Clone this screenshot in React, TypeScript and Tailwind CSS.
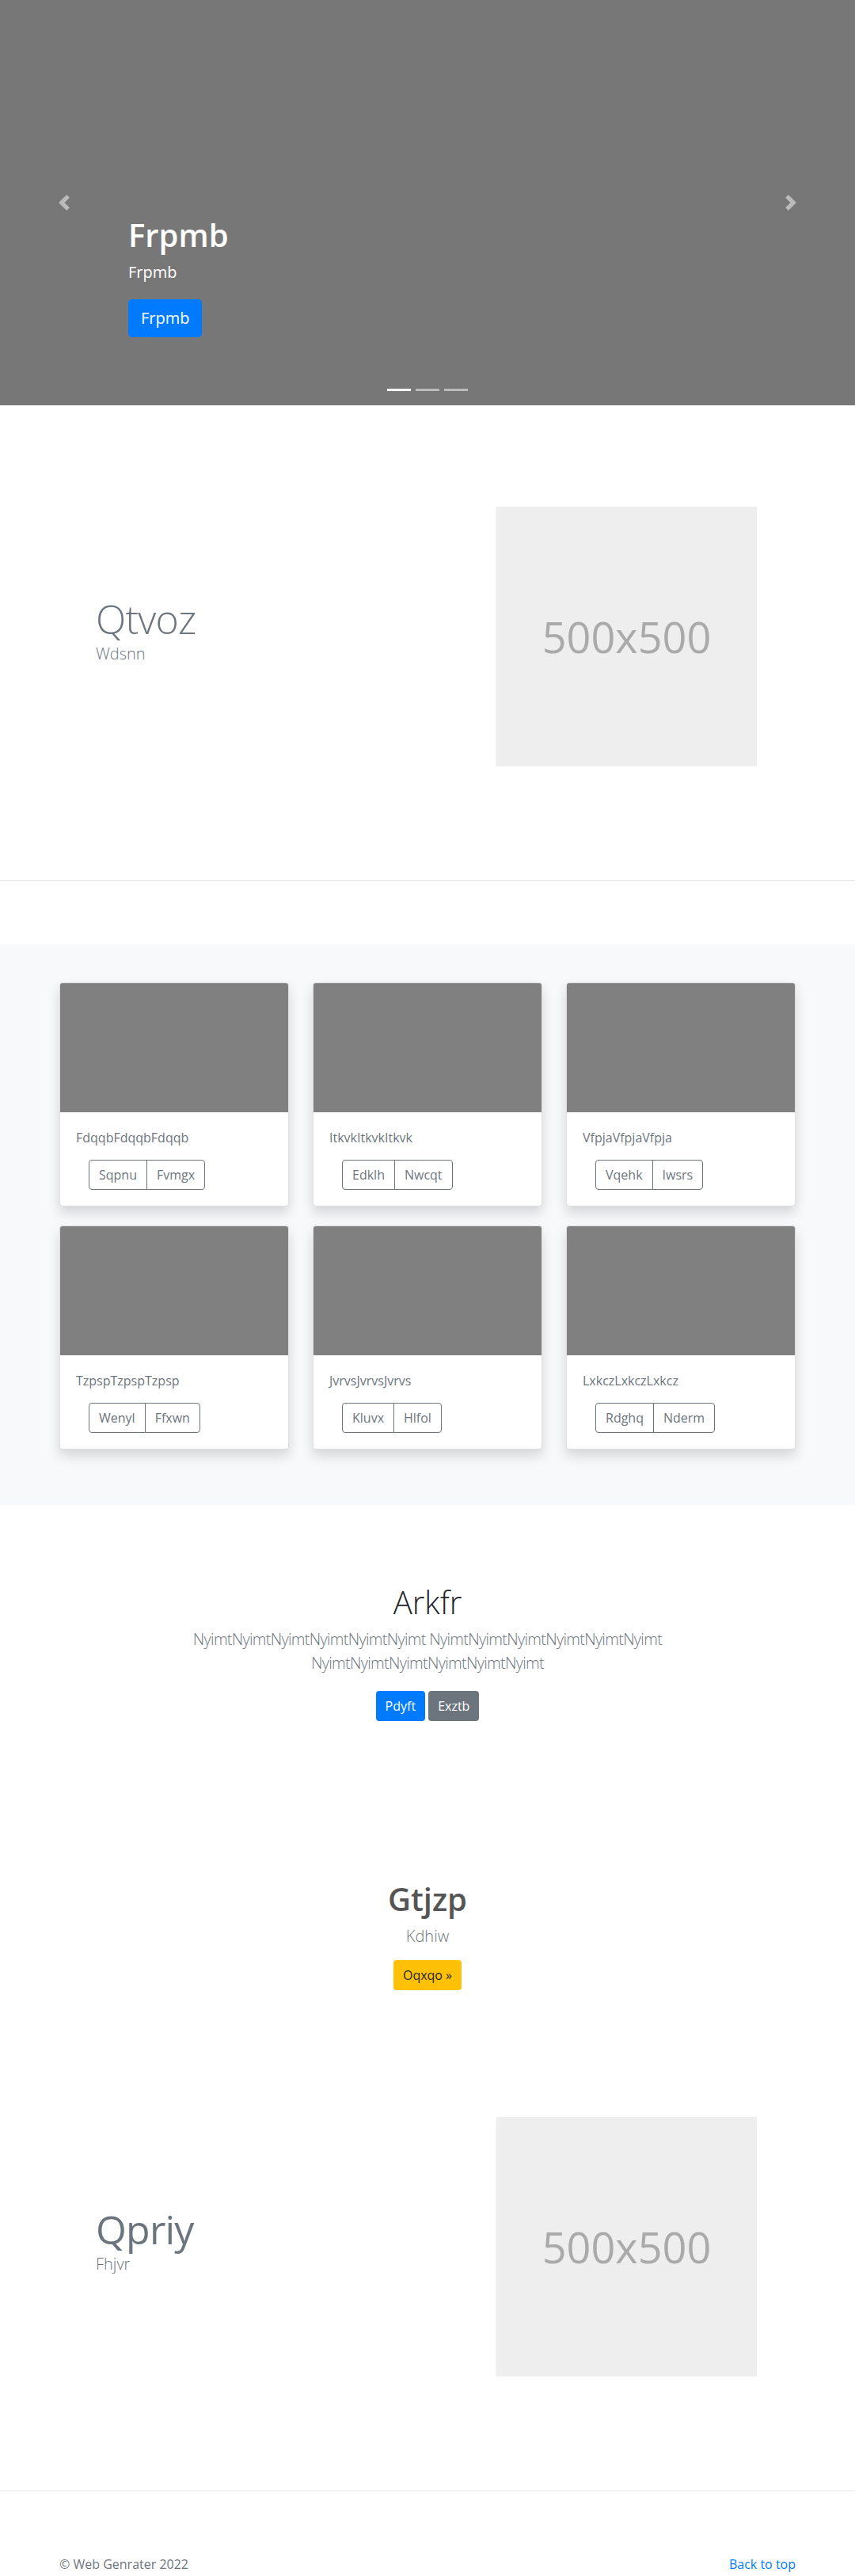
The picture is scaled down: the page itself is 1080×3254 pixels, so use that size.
import React from 'react'

const cards = [
  { title: 'FdqqbFdqqbFdqqb', a: 'Sqpnu', b: 'Fvmgx' },
  { title: 'ItkvkItkvkItkvk', a: 'Edklh', b: 'Nwcqt' },
  { title: 'VfpjaVfpjaVfpja', a: 'Vqehk', b: 'Iwsrs' },
  { title: 'TzpspTzpspTzpsp', a: 'Wenyl', b: 'Ffxwn' },
  { title: 'JvrvsJvrvsJvrvs', a: 'Kluvx', b: 'Hlfol' },
  { title: 'LxkczLxkczLxkcz', a: 'Rdghq', b: 'Nderm' },
]

const Chevron = ({ dir }: { dir: 'prev' | 'next' }) => (
  <svg viewBox="0 0 8 8" className="w-5 h-5" fill="#fff">
    <path d={dir === 'prev' ? 'M5.25 0l-4 4 4 4 1.5-1.5L4.25 4l2.5-2.5L5.25 0z' : 'M2.75 0l-1.5 1.5L3.75 4l-2.5 2.5L2.75 8l4-4-4-4z'} />
  </svg>
)

const Placeholder = () => (
  <div className="w-[329px] h-[328px] bg-[#eee] flex items-center justify-center">
    <span className="text-[54px] text-[#aaa] leading-none">500x500</span>
  </div>
)

const Feature: React.FC<{ title: string; sub: string; light?: boolean }> = ({ title, sub, light }) => (
  <section className="pt-[128px] pb-[144px]">
    <div className="w-[960px] mx-auto flex items-center">
      <div className="flex-1 pl-[61px] pb-[10px]">
        <h2 className={`text-[50px] leading-none tracking-[-0.8px] text-[#6c757d] ${light ? 'font-light' : 'font-normal'}`}>{title}</h2>
        <p className="text-[20px] leading-[30px] font-light text-[#6c757d] mt-[4px]">{sub}</p>
      </div>
      <div className="mr-[64px]">
        <Placeholder />
      </div>
    </div>
  </section>
)

const App: React.FC = () => {
  return (
    <div className="font-['Open_Sans',sans-serif] text-[#212529] bg-white">
      {/* carousel */}
      <section className="relative h-[512px] bg-[#777]">
        <div className="absolute inset-y-0 left-0 w-[15%] flex items-center justify-center opacity-50"><Chevron dir="prev" /></div>
        <div className="absolute inset-y-0 right-0 w-[15%] flex items-center justify-center opacity-50"><Chevron dir="next" /></div>
        <div className="absolute left-[15%] top-[273px] text-white">
          <h1 className="text-[40px] leading-[48px] font-semibold mb-2">Frpmb</h1>
          <p className="text-[20px] leading-[30px] mb-[19px]">Frpmb</p>
          <a href="#" className="inline-block bg-[#007bff] text-white text-[20px] leading-[30px] px-4 py-[9px] rounded-[5px]">Frpmb</a>
        </div>
        <ol className="absolute bottom-[18px] inset-x-0 flex justify-center gap-[6px]">
          <li className="w-[30px] h-[3px] bg-white" />
          <li className="w-[30px] h-[3px] bg-white/50" />
          <li className="w-[30px] h-[3px] bg-white/50" />
        </ol>
      </section>

      <Feature title="Qtvoz" sub="Wdsnn" light />
      <hr className="border-0 border-t border-[#e5e5e5]" />

      {/* album */}
      <section className="mt-[80px] bg-[#f8f9fa] pt-12 pb-[70px]">
        <div className="w-[960px] mx-auto px-[15px] grid grid-cols-3 gap-x-[30px] gap-y-6">
          {cards.map(c => (
            <div key={c.title} className="bg-white border border-black/[0.125] rounded shadow-[0_8px_16px_rgba(0,0,0,0.15)] overflow-hidden">
              <div className="h-[163px] bg-[#808080]" />
              <div className="p-5">
                <p className="text-[16px] leading-6 text-[#6c757d] mb-4">{c.title}</p>
                <div className="ml-4 inline-flex">
                  <button className="border border-[#6c757d] text-[#6c757d] text-[16px] leading-6 px-3 py-[6px] rounded-l">{c.a}</button>
                  <button className="-ml-px border border-[#6c757d] text-[#6c757d] text-[16px] leading-6 px-3 py-[6px] rounded-r">{c.b}</button>
                </div>
              </div>
            </div>
          ))}
        </div>
      </section>

      {/* jumbotron */}
      <section className="pt-[99px] pb-[193px] text-center">
        <div className="max-w-[640px] mx-auto px-[15px]">
          <h1 className="text-[40px] leading-[48px] font-light text-[#212529] mb-2">Arkfr</h1>
          <p className="text-[20px] leading-[30px] font-light tracking-[-0.7px] text-[#6c757d] mb-[20px]">NyimtNyimtNyimtNyimtNyimtNyimt NyimtNyimtNyimtNyimtNyimtNyimt NyimtNyimtNyimtNyimtNyimtNyimt</p>
          <div className="my-2 flex justify-center gap-1">
            <a href="#" className="bg-[#007bff] text-white text-[16px] leading-6 px-3 py-[7px] rounded">Pdyft</a>
            <a href="#" className="bg-[#6c757d] text-white text-[16px] leading-6 px-3 py-[7px] rounded">Exztb</a>
          </div>
        </div>
      </section>

      <section className="text-center">
        <h1 className="text-[40px] leading-[48px] font-semibold text-[#555] mb-2">Gtjzp</h1>
        <p className="text-[20px] leading-[30px] font-light text-[#6c757d] mb-[15px]">Kdhiw</p>
        <a href="#" className="inline-block bg-[#ffc107] text-[#212529] text-[16px] leading-6 px-3 py-[7px] rounded">Oqxqo »</a>
      </section>

      <div className="h-[32px]" />
      <Feature title="Qpriy" sub="Fhjvr" />

      <footer className="border-t border-[#e5e5e5] pt-[80px]">
        <div className="w-[960px] mx-auto px-[15px] flex justify-between text-[16px] leading-6">
          <p className="text-[#6c757d]">© Web Genrater 2022</p>
          <a href="#" className="text-[#007bff]">Back to top</a>
        </div>
      </footer>
    </div>
  )
}

export default App
